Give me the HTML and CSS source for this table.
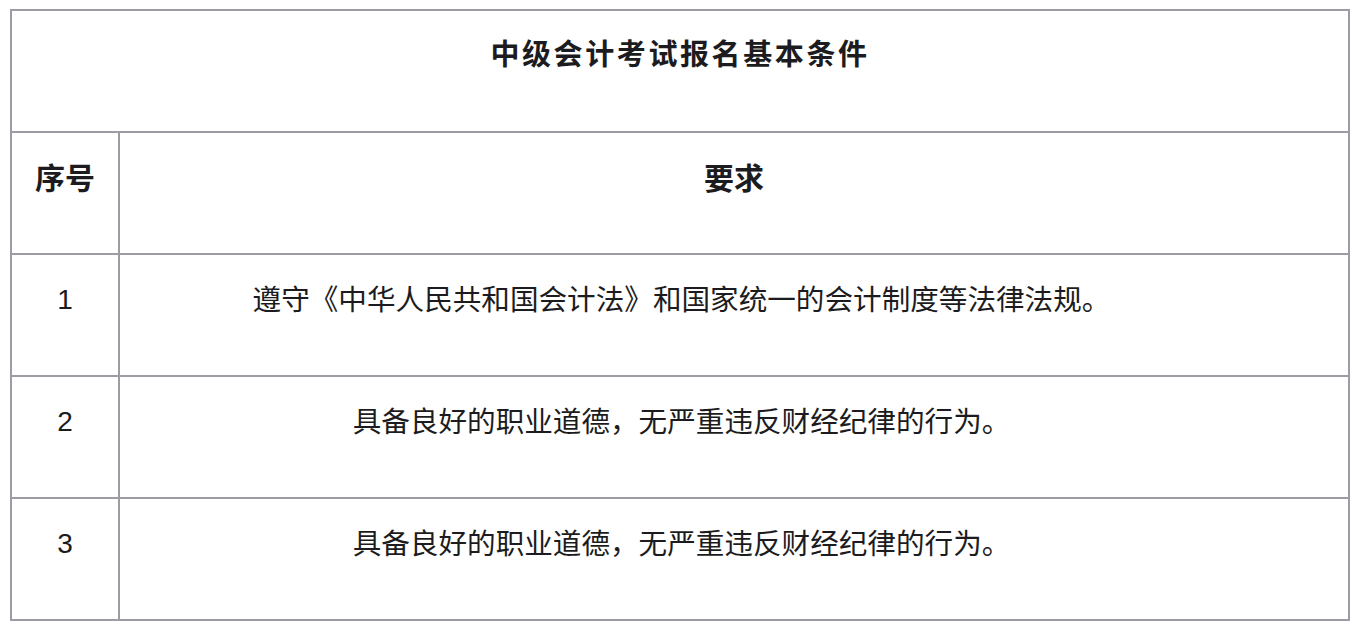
FILE: index.html
```html
<!DOCTYPE html>
<html lang="zh">
<head>
<meta charset="utf-8">
<title>中级会计考试报名基本条件</title>
<link rel="stylesheet" href="styles.css">
</head>
<body>
<table class="req-table">
  <colgroup>
    <col class="col-num">
    <col class="col-text">
  </colgroup>
  <tr>
    <td class="cell title" colspan="2">中级会计考试报名基本条件</td>
  </tr>
  <tr>
    <td class="cell head">序号</td>
    <td class="cell head">要求</td>
  </tr>
  <tr>
    <td class="cell">1</td>
    <td class="cell text">遵守《中华人民共和国会计法》和国家统一的会计制度等法律法规。</td>
  </tr>
  <tr>
    <td class="cell">2</td>
    <td class="cell text">具备良好的职业道德，无严重违反财经纪律的行为。</td>
  </tr>
  <tr>
    <td class="cell">3</td>
    <td class="cell text">具备良好的职业道德，无严重违反财经纪律的行为。</td>
  </tr>
</table>
</body>
</html>
```
FILE: styles.css
```css
html, body {
  margin: 0;
  padding: 0;
  background: #ffffff;
}
body {
  padding: 9px 0 0 10px;
  font-family: "Liberation Sans", "Noto Sans CJK SC", sans-serif;
  color: #1c1c20;
}
.req-table {
  width: 1340px;
  border: 1px solid #9b9ca4;
  border-collapse: separate;
  border-spacing: 0;
  table-layout: fixed;
}
.col-num {
  width: 108px;
}
.cell {
  border: 1px solid #9b9ca4;
  box-sizing: border-box;
  height: 122px;
  padding: 27px 0 0 0;
  vertical-align: top;
  text-align: center;
  font-size: 28px;
  line-height: 36px;
  white-space: nowrap;
}
.title {
  font-weight: bold;
  font-size: 29px;
  letter-spacing: 2.6px;
  padding-top: 26px;
}
.head {
  font-weight: bold;
  font-size: 30px;
  padding-top: 28px;
}
.text {
  font-size: 28.6px;
  padding-right: 105px;
}
```
